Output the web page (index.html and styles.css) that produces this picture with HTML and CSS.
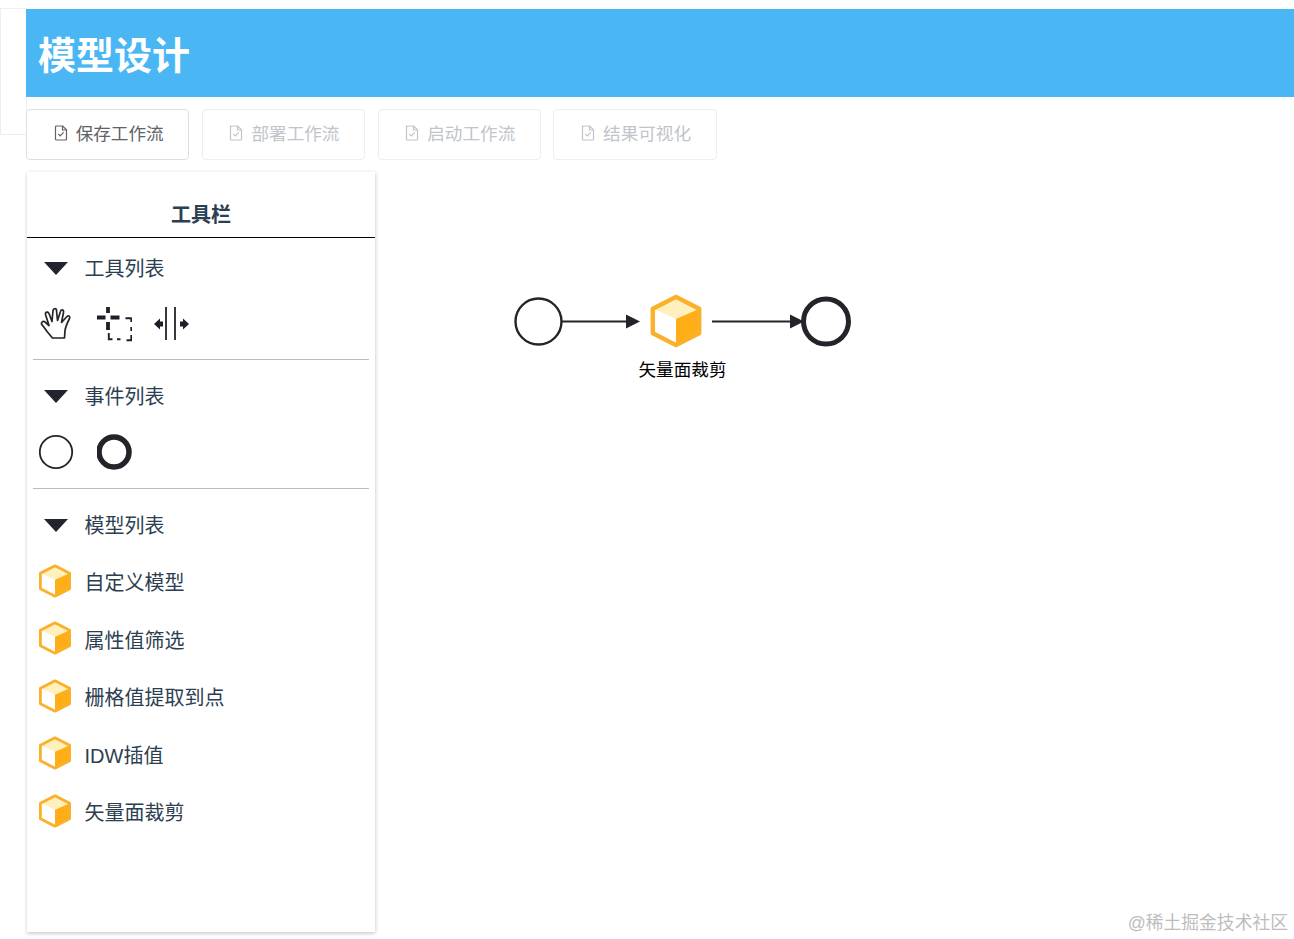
FILE: index.html
```html
<!DOCTYPE html>
<html lang="zh">
<head>
<meta charset="utf-8">
<title>模型设计</title>
<link rel="stylesheet" href="styles.css">
</head>
<body>
<svg class="defs" width="0" height="0" aria-hidden="true">
  <symbol id="cube" viewBox="0 0 34 34">
    <path d="M17 1.800 31.600 9.300 17 15.800 2.400 9.300Z" fill="#fff0bd"/>
    <path d="M2.400 9.300 17 15.800V32.200L2.400 24.700Z" fill="#fff"/>
    <path d="M31.600 9.300 17 15.800V32.200L31.600 24.700Z" fill="#ffae17"/>
    <path d="M17 1.800 31.600 9.300V24.700L17 32.200 2.400 24.700V9.300Z" fill="none" stroke="#fbb02a" stroke-width="2.800" stroke-linejoin="round"/>
  </symbol>
  <symbol id="doc" viewBox="0 0 14 16">
    <path d="M1.500 1h7.200L12.500 4.800V14a1 1 0 0 1-1 1h-9a1 1 0 0 1-1-1V2a1 1 0 0 1 1-1Z" fill="none" stroke="currentColor" stroke-width="1.200"/>
    <path d="M8.500 1v4h4M4.200 8.800l2 2 3.400-3.400" fill="none" stroke="currentColor" stroke-width="1.200"/>
  </symbol>
</svg>
<div class="corner-box"></div>
<div class="page">
  <header class="banner"><h1 class="banner-title">模型设计</h1></header>
  <nav class="actions">
    <button class="btn"><svg class="btn-icon"><use href="#doc"/></svg><span class="btn-label">保存工作流</span></button>
    <button class="btn btn-off"><svg class="btn-icon"><use href="#doc"/></svg><span class="btn-label">部署工作流</span></button>
    <button class="btn btn-off"><svg class="btn-icon"><use href="#doc"/></svg><span class="btn-label">启动工作流</span></button>
    <button class="btn btn-off"><svg class="btn-icon"><use href="#doc"/></svg><span class="btn-label">结果可视化</span></button>
  </nav>
  <main class="workspace">
    <aside class="panel">
      <h2 class="panel-title">工具栏</h2>
      <section class="section section-first">
        <div class="row"><span class="slot"><span class="tri"></span></span><span class="row-label">工具列表</span></div>
        <div class="tools">
          <svg class="tool" viewBox="0 0 35 44">
            <path d="M13.500 36 8 29.500C6 26.500 3.500 23.500 2.500 22 2 20 4.500 18.500 6 20L10 23.500 6.500 12.500C6 10 9 9 10 11.500L13 19.500 14 8.500C14.500 6 17.500 6 17.500 8.500L18.500 18.500 21.500 9.500C22 7 25 7.500 24.500 10.500L22.500 20.500 28 14.500C29.500 13 31.500 14.500 30.500 16.500 28 21.500 26.500 25.500 26 28.500L25.500 36Z" fill="#fff" stroke="#22242a" stroke-width="1.700" stroke-linejoin="round"/>
          </svg>
          <svg class="tool" viewBox="0 0 35 44">
            <path d="M0 15.500H8.500M13.500 15.500H22.500M11 5V11M11 20V28" fill="none" stroke="#1d2028" stroke-width="3.800"/>
            <path d="M28.500 16.300H34.300M34.300 15.500V20M34.300 25V29M34.300 33V38.200H29.500M23.500 37.300H20M15.500 37.300H11.800V31" fill="none" stroke="#1d2028" stroke-width="1.900"/>
          </svg>
          <svg class="tool" viewBox="0 0 35 44">
            <path d="M12 5V38M21 5V38" stroke="#22242a" stroke-width="1.800" fill="none"/>
            <path d="M0 22 6 16.500V19.500H9V24.500H6V27.500ZM35 22 29 16.500V19.500H26V24.500H29V27.500Z" fill="#1d2028"/>
          </svg>
        </div>
      </section>
      <section class="section">
        <div class="row"><span class="slot"><span class="tri"></span></span><span class="row-label">事件列表</span></div>
        <div class="tools">
          <svg class="tool" viewBox="0 0 35 44"><circle cx="17" cy="22" r="16.200" fill="#fff" stroke="#22242a" stroke-width="1.800"/></svg>
          <svg class="tool" viewBox="0 0 35 44"><circle cx="17" cy="22" r="15" fill="#fff" stroke="#22242a" stroke-width="5.500"/></svg>
        </div>
      </section>
      <section class="section section-last">
        <div class="row"><span class="slot"><span class="tri"></span></span><span class="row-label">模型列表</span></div>
        <ul class="models">
          <li class="model"><svg class="cube"><use href="#cube"/></svg><span class="model-label">自定义模型</span></li>
          <li class="model"><svg class="cube"><use href="#cube"/></svg><span class="model-label">属性值筛选</span></li>
          <li class="model"><svg class="cube"><use href="#cube"/></svg><span class="model-label">栅格值提取到点</span></li>
          <li class="model"><svg class="cube"><use href="#cube"/></svg><span class="model-label">IDW插值</span></li>
          <li class="model"><svg class="cube"><use href="#cube"/></svg><span class="model-label">矢量面裁剪</span></li>
        </ul>
      </section>
    </aside>
    <div class="canvas">
      <svg class="diagram" viewBox="375 172 919 760">
        <circle cx="538.500" cy="321.500" r="23" fill="#fff" stroke="#22242a" stroke-width="2.400"/>
        <path d="M562 321.500H628" stroke="#22242a" stroke-width="2" fill="none"/>
        <path d="M640 321.500 626 314.500V328.500Z" fill="#22242a"/>
        <use href="#cube" x="649" y="294" width="54" height="54"/>
        <path d="M712 321.500H792" stroke="#22242a" stroke-width="2" fill="none"/>
        <circle cx="826" cy="321.500" r="22.500" fill="#fff" stroke="#22242a" stroke-width="5"/>
        <path d="M804 321.500 790 314.500V328.500Z" fill="#22242a"/>
        <text class="node-label" x="682.500" y="376" text-anchor="middle">矢量面裁剪</text>
      </svg>
    </div>
  </main>
</div>
<div class="watermark">@稀土掘金技术社区</div>
</body>
</html>
```
FILE: styles.css
```css
* { box-sizing: border-box; }
html, body { margin: 0; padding: 0; background: #fff; }
body {
  width: 1294px;
  height: 939px;
  overflow: hidden;
  position: relative;
  font-family: "Liberation Sans", "Noto Sans CJK SC", sans-serif;
  color: #2c3e50;
}
.defs { position: absolute; }
.corner-box {
  position: absolute;
  left: 0;
  top: 8px;
  width: 27px;
  height: 127px;
  border: 1px solid #eeeeee;
}
.page {
  position: relative;
  display: flex;
  flex-direction: column;
  height: 939px;
  padding: 9px 0 0 26px;
}
.banner {
  height: 88px;
  background: #4ab7f4;
  display: flex;
  align-items: center;
  padding: 6px 0 0 12px;
  flex: none;
}
.banner-title {
  margin: 0;
  font-size: 38px;
  line-height: 1;
  font-weight: 700;
  color: #fff;
}
.actions {
  display: flex;
  gap: 12.500px;
  margin-top: 12px;
  flex: none;
}
.btn {
  width: 163.300px;
  height: 51px;
  display: flex;
  align-items: center;
  justify-content: center;
  gap: 8px;
  padding: 0 0 4px 2px;
  background: #fff;
  border: 1px solid #dcdfe6;
  border-radius: 4px;
  color: #606266;
  font: inherit;
  font-size: 17.600px;
}
.btn-off {
  color: #c0c4cc;
  border-color: #ebeef5;
}
.btn-icon { width: 14px; height: 16px; flex: none; }
.btn-label { display: block; }
.workspace {
  display: flex;
  flex: none;
  height: 760px;
  margin-top: 12px;
}
.panel {
  width: 348px;
  height: 760px;
  margin-left: 1px;
  flex: none;
  background: #fff;
  box-shadow: 0 2px 4px rgba(0, 0, 0, 0.16), 1px 0 4px rgba(0, 0, 0, 0.08);
}
.panel-title {
  margin: 0;
  height: 66px;
  padding-top: 30px;
  border-bottom: 1px solid #000;
  text-align: center;
  font-size: 20px;
  line-height: 26px;
  font-weight: 700;
  color: #2c3e50;
}
.section {
  margin: 0 6px;
  padding: 14px 6px;
  border-bottom: 1px solid #bbbbbb;
}
.section-first { padding-top: 8px; padding-bottom: 13px; }
.section-last { border-bottom: 0; }
.row {
  display: flex;
  align-items: center;
  gap: 11.500px;
  height: 44px;
  font-size: 20px;
}
.row-label { margin-bottom: 2px; }
.slot { width: 34px; display: flex; justify-content: center; flex: none; }
.tri {
  width: 0;
  height: 0;
  border-left: 12px solid transparent;
  border-right: 12px solid transparent;
  border-top: 13px solid #22242e;
}
.tools {
  display: flex;
  gap: 22.500px;
  height: 44px;
  margin-top: 12px;
}
.tool { width: 35px; height: 44px; flex: none; display: block; }
.models {
  list-style: none;
  margin: 5px 0 0;
  padding: 0;
}
.model {
  display: flex;
  align-items: center;
  gap: 12.500px;
  height: 57.500px;
  font-size: 20px;
}
.model-label { margin-top: 2px; }
.cube { width: 34px; height: 34px; flex: none; margin-left: -1px; }
.canvas { flex: 1; min-width: 0; }
.diagram { display: block; width: 919px; height: 760px; }
.node-label {
  font-size: 17.600px;
  fill: #000;
}
.watermark {
  position: absolute;
  right: 6px;
  top: 910px;
  font-size: 17.800px;
  line-height: 26px;
  color: #bdbdbd;
  white-space: nowrap;
}
```
